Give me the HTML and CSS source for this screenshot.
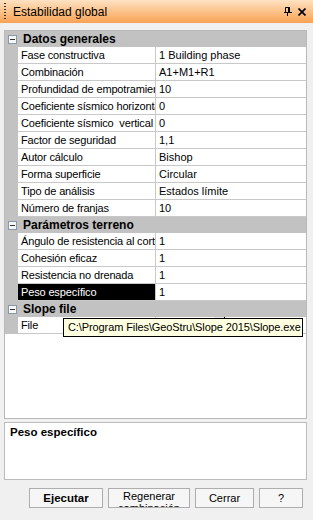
FILE: index.html
```html
<!DOCTYPE html>
<html lang="es">
<head>
  <meta charset="UTF-8" />
  <title>Estabilidad global</title>
  <link rel="stylesheet" href="styles.css">
</head>
<body>
  <header class="titlebar">
    <span class="grip"></span>
    <span class="title">Estabilidad global</span>
    <span class="tools">
      <svg class="pin" width="8" height="9" viewBox="0 0 8 9">
        <path d="M1.5 0.5h4v5h-4z" fill="none" stroke="#000"/>
        <path d="M4 0h2v5H4z" fill="#000"/>
        <path d="M0 5h8v1H0z M3 6h1v3H3z" fill="#000"/>
      </svg>
      <svg class="close" width="8" height="8" viewBox="0 0 8 8">
        <path d="M0.5 0.5L7.5 7.5M7.5 0.5L0.5 7.5" stroke="#000" stroke-width="1.7"/>
      </svg>
    </span>
  </header>

  <main class="panel">
    <div class="grid">
      <div class="cat"><span class="toggle"></span>Datos generales</div>
      <div class="row"><span class="name">Fase constructiva</span><span class="value">1 Building phase</span></div>
      <div class="row"><span class="name">Combinación</span><span class="value">A1+M1+R1</span></div>
      <div class="row"><span class="name">Profundidad de empotramiento</span><span class="value">10</span></div>
      <div class="row"><span class="name">Coeficiente sísmico horizontal</span><span class="value">0</span></div>
      <div class="row"><span class="name">Coeficiente sísmico&nbsp; vertical</span><span class="value">0</span></div>
      <div class="row"><span class="name">Factor de seguridad</span><span class="value">1,1</span></div>
      <div class="row"><span class="name">Autor cálculo</span><span class="value">Bishop</span></div>
      <div class="row"><span class="name">Forma superficie</span><span class="value">Circular</span></div>
      <div class="row"><span class="name">Tipo de análisis</span><span class="value">Estados límite</span></div>
      <div class="row"><span class="name">Número de franjas</span><span class="value">10</span></div>

      <div class="cat"><span class="toggle"></span>Parámetros terreno</div>
      <div class="row"><span class="name">Ángulo de resistencia al corte</span><span class="value">1</span></div>
      <div class="row"><span class="name">Cohesión eficaz</span><span class="value">1</span></div>
      <div class="row"><span class="name">Resistencia no drenada</span><span class="value">1</span></div>
      <div class="row selected"><span class="name">Peso específico</span><span class="value">1</span></div>

      <div class="cat"><span class="toggle"></span>Slope file</div>
      <div class="row file"><span class="name">File</span><span class="value"><span class="browse"></span></span></div>

      <div class="tooltip">C:\Program Files\GeoStru\Slope 2015\Slope.exe</div>
    </div>

    <div class="help">
      <b>Peso específico</b>
    </div>

    <div class="buttons">
      <button class="btn bold">Ejecutar</button>
      <button class="btn regen"><span class="label">Regenerar<br>combinación</span></button>
      <button class="btn">Cerrar</button>
      <button class="btn small">?</button>
    </div>
  </main>
</body>
</html>
```

FILE: styles.css
```css
body {
  margin: 0;
  width: 313px;
  height: 520px;
  overflow: hidden;
  background: #f0f0f0;
  font-family: "Liberation Sans", Arial, sans-serif;
  font-size: 11px;
  color: #000;
}
.titlebar {
  height: 23px;
  display: flex;
  align-items: center;
  background: linear-gradient(#fee2c2, #f8a253);
}
.grip {
  width: 2px;
  height: 17px;
  margin-left: 4px;
  background: repeating-linear-gradient(#333 0 1px, transparent 1px 3px);
}
.title {
  margin-left: 7px;
  font-size: 12px;
  flex: 1;
}
.tools {
  display: flex;
  align-items: center;
  gap: 6px;
  margin-right: 7px;
}
.panel {
  padding: 7px 6px 0 4px;
}
.grid {
  position: relative;
  height: 387px;
  background: #fff;
  border: 1px solid #b9b9b9;
}
.cat {
  height: 16px;
  display: flex;
  align-items: center;
  background: #c2c2c2;
  font-weight: bold;
  font-size: 12px;
}
.toggle {
  position: relative;
  width: 7px;
  height: 7px;
  margin: 0 6px 0 3px;
  border: 1px solid #8a97a8;
  background: #f4f6f8;
}
.toggle::after {
  content: "";
  position: absolute;
  left: 1px;
  top: 3px;
  width: 5px;
  height: 1px;
  background: #333;
}
.row {
  display: flex;
  height: 17px;
  padding-left: 13px;
  background: #c2c2c2;
}
.row .name,
.row .value {
  box-sizing: border-box;
  height: 17px;
  line-height: 16px;
  background: #fff;
  border-bottom: 1px solid #c8c8c8;
  white-space: nowrap;
  overflow: hidden;
}
.row .name {
  width: 138px;
  padding-left: 3px;
  border-right: 1px solid #c8c8c8;
  letter-spacing: -0.15px;
}
.row .value {
  flex: 1;
  padding-left: 3px;
}
.row.selected .name {
  background: #000;
  color: #fff;
}
.row.file .value {
  display: flex;
  padding-left: 58px;
}
.browse {
  width: 10px;
  background: #e6e6e6;
  border-right: 1px solid #000;
}
.tooltip {
  position: absolute;
  left: 58px;
  top: 287px;
  box-sizing: border-box;
  width: 240px;
  height: 19px;
  line-height: 17px;
  padding-left: 4px;
  background: #ffffe1;
  border: 1px solid #000;
  font-size: 11px;
  letter-spacing: -0.1px;
  white-space: nowrap;
}
.help {
  box-sizing: border-box;
  height: 58px;
  margin-top: 3px;
  padding: 3px 5px;
  background: #fff;
  border: 1px solid #bcbcbc;
  font-size: 11.5px;
}
.buttons {
  display: flex;
  justify-content: flex-end;
  gap: 5px;
  margin-top: 8px;
  padding-right: 4px;
}
.btn {
  height: 20px;
  width: 74px;
  padding: 0;
  background: #f6f6f6;
  border: 1px solid #adadad;
  font-family: "Liberation Sans", Arial, sans-serif;
  font-size: 11px;
  color: #000;
  overflow: hidden;
}
.btn.bold {
  font-weight: bold;
  font-size: 11.5px;
}
.btn.regen {
  width: 82px;
}
.btn .label {
  display: block;
  height: 18px;
  padding-top: 1px;
  line-height: 12px;
  overflow: hidden;
}
.btn:nth-child(3) {
  width: 59px;
}
.btn.small {
  width: 44px;
}
```
